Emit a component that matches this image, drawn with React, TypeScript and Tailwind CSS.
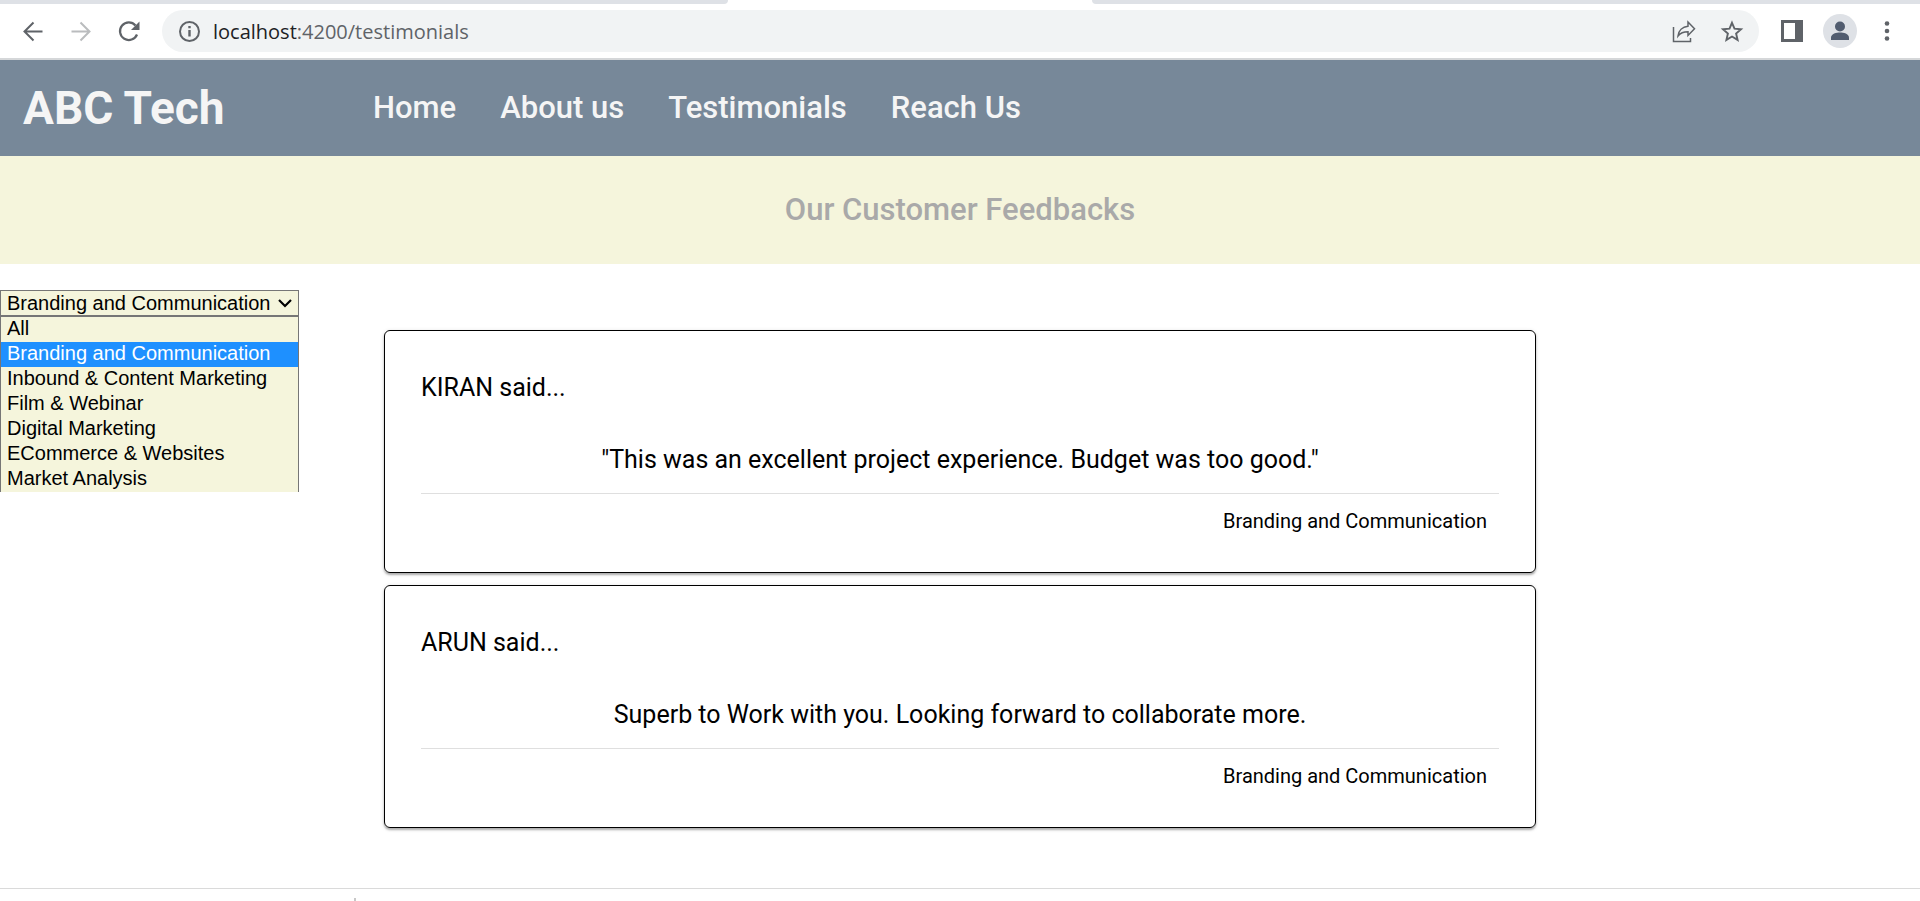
import { useState } from "react";

const categories = [
  "All",
  "Branding and Communication",
  "Inbound & Content Marketing",
  "Film & Webinar",
  "Digital Marketing",
  "ECommerce & Websites",
  "Market Analysis",
];

const links = [
  { label: "Home", href: "/home" },
  { label: "About us", href: "/about" },
  { label: "Testimonials", href: "/testimonials" },
  { label: "Reach Us", href: "/reach" },
];

const testimonials = [
  {
    name: "KIRAN",
    quote: '"This was an excellent project experience. Budget was too good."',
    category: "Branding and Communication",
  },
  {
    name: "ARUN",
    quote: "Superb to Work with you. Looking forward to collaborate more.",
    category: "Branding and Communication",
  },
];

function BrowserBar() {
  return (
    <div className="border-b-2 border-[#d5d7d9] bg-white">
      <div className="flex h-1" aria-hidden="true">
        <div className="w-[37.9%] rounded-br-lg bg-[#dee1e6]" />
        <div className="w-[19%]" />
        <div className="flex-1 rounded-bl-lg bg-[#dee1e6]" />
      </div>
      <div className="flex h-[54px] items-center px-5 text-[#5f6368]">
        <button type="button" aria-label="Back" className="mr-6 size-6">
          <svg viewBox="0 0 24 24" className="size-6" fill="none" stroke="currentColor" strokeWidth="2">
            <path d="M22.500 12.500H4.500M13.500 3.500L4.500 12.500L13.500 21.500" />
          </svg>
        </button>
        <button type="button" aria-label="Forward" className="mr-6 size-6 text-[#babcbe]">
          <svg viewBox="0 0 24 24" className="size-6" fill="none" stroke="currentColor" strokeWidth="2">
            <path d="M3.500 12.500H21.500M12.500 3.500L21.500 12.500L12.500 21.500" />
          </svg>
        </button>
        <button type="button" aria-label="Reload" className="mr-[22px] size-6">
          <svg viewBox="0 0 24 24" className="size-6" fill="none" stroke="currentColor" strokeWidth="2.200">
            <path d="M21 15.500A8.800 8.800 0 1 1 19.500 6.500" />
            <path d="M23.500 2.500V11H15Z" fill="currentColor" stroke="none" />
          </svg>
        </button>
        <div className="flex h-[42px] flex-1 items-center rounded-full bg-[#f1f3f4] px-[15px]">
          <svg viewBox="0 0 24 24" className="size-6 shrink-0" fill="none" stroke="currentColor" strokeWidth="2" aria-hidden="true">
            <circle cx="12.500" cy="12.500" r="9.500" />
            <path d="M12.500 11V17.500M12.500 7V9.300" strokeWidth="2.400" />
          </svg>
          <div className="ml-3 flex-1 pt-0.5 font-['Open_Sans','Noto_Sans',sans-serif] text-[20px] leading-6">
            <span className="text-[#202124]">localhost</span>:4200/testimonials
          </div>
          <button type="button" aria-label="Share this page" className="mr-6 size-6">
            <svg viewBox="0 0 24 24" className="size-6" fill="none" stroke="currentColor" strokeWidth="1.500">
              <path d="M1.500 8V22.500H18.500V19" />
              <path d="M16 3L22.500 9.800L16 16.500V12.800C11.500 12.800 8.800 13.500 6 17C6.500 11.500 10.500 7.800 16 7.200Z" />
            </svg>
          </button>
          <button type="button" aria-label="Bookmark this page" className="size-6">
            <svg viewBox="0 0 24 24" className="size-6" fill="none" stroke="currentColor" strokeWidth="1.900">
              <path d="M12 3.800L14.500 9.700L21 10.300L16.100 14.500L17.600 20.900L12 17.500L6.400 20.900L7.900 14.500L3 10.300L9.500 9.700Z" />
            </svg>
          </button>
        </div>
        <button type="button" aria-label="Side panel" className="ml-[21px] size-6">
          <svg viewBox="0 0 24 24" className="size-6">
            <path fill="currentColor" fillRule="evenodd" d="M1 1H23V23H1ZM4 4V20H15V4Z" />
          </svg>
        </button>
        <button type="button" aria-label="Profile" className="ml-[19px] size-[34px] rounded-full bg-[#dee1e6]">
          <svg viewBox="0 0 34 34" className="size-[34px]" fill="#515c6f">
            <circle cx="17" cy="12.500" r="5" />
            <path d="M8 26V23.500C8 19.800 13.500 18.500 17 18.500S26 19.800 26 23.500V26Z" />
          </svg>
        </button>
        <button type="button" aria-label="More" className="ml-[19px] size-6">
          <svg viewBox="0 0 24 24" className="size-6" fill="currentColor">
            <circle cx="11" cy="4.500" r="2.300" />
            <circle cx="11" cy="12" r="2.300" />
            <circle cx="11" cy="19.500" r="2.300" />
          </svg>
        </button>
      </div>
    </div>
  );
}

function CategoryFilter() {
  const [selected, setSelected] = useState("Branding and Communication");
  return (
    <div className="relative w-[299px] font-['Liberation_Sans',Arial,sans-serif] text-[20px] text-black">
      <select
        aria-label="Category"
        value={selected}
        onChange={(e) => setSelected(e.target.value)}
        className="block h-[26px] w-full appearance-none border border-[#767676] bg-[#f5f5dc] pl-1.5 leading-6"
      >
        {categories.map((c) => (
          <option key={c}>{c}</option>
        ))}
      </select>
      <svg viewBox="0 0 16 10" className="pointer-events-none absolute top-2 right-1.5 h-2.5 w-4" fill="none" stroke="black" strokeWidth="2.200" aria-hidden="true">
        <path d="M2 2L8 8L14 2" />
      </svg>
      <ul role="listbox" aria-label="Categories" className="absolute top-[26px] left-0 w-full border-x border-t border-[#767676] bg-[#f5f5dc]">
        {categories.map((c) => (
          <li
            key={c}
            role="option"
            aria-selected={c === selected}
            onClick={() => setSelected(c)}
            className={
              c === selected
                ? "bg-[#1e90ff] pb-0.5 pl-1.5 leading-[23px] text-white"
                : "pb-0.5 pl-1.5 leading-[23px]"
            }
          >
            {c}
          </li>
        ))}
      </ul>
    </div>
  );
}

export default function App() {
  return (
    <div className="flex min-h-screen flex-col bg-white font-[Roboto,sans-serif] text-black">
      <BrowserBar />
      <header className="flex h-24 items-center bg-[#778899] pl-[23px] text-[#f5f5f5]">
        <h1 className="w-[350px] text-[46px] leading-none font-bold">ABC Tech</h1>
        <nav className="flex gap-11 text-[31px] leading-10 font-medium">
          {links.map((l) => (
            <a key={l.label} href={l.href}>
              {l.label}
            </a>
          ))}
        </nav>
      </header>
      <h2 className="bg-[#f5f5dc] py-[34px] text-center text-[31px] leading-10 font-medium text-[#a9a9a9]">
        Our Customer Feedbacks
      </h2>
      <main className="flex-1 pt-[26px]">
        <CategoryFilter />
        <div className="mx-auto mt-[14px] flex w-3/5 flex-col gap-3">
          {testimonials.map((t) => (
            <article key={t.name} className="rounded-md border border-black px-9 pt-[39px] pb-[33px] shadow-[0_2px_2px_rgba(0,0,0,0.25),0_1px_4px_rgba(0,0,0,0.15)]">
              <p className="text-[25px] leading-9">{t.name} said...</p>
              <p className="mt-9 text-center text-[25px] leading-9">{t.quote}</p>
              <p className="mt-[15px] border-t border-[#dfdfdf] pt-[9px] pr-3 text-right text-[20px] leading-9">{t.category}</p>
            </article>
          ))}
        </div>
      </main>
      <footer className="h-[13px] border-t border-[#dadada] pt-[9px] pl-[354px]">
        <div className="h-[3px] w-0.5 bg-[#c8c8c8]" />
      </footer>
    </div>
  );
}
